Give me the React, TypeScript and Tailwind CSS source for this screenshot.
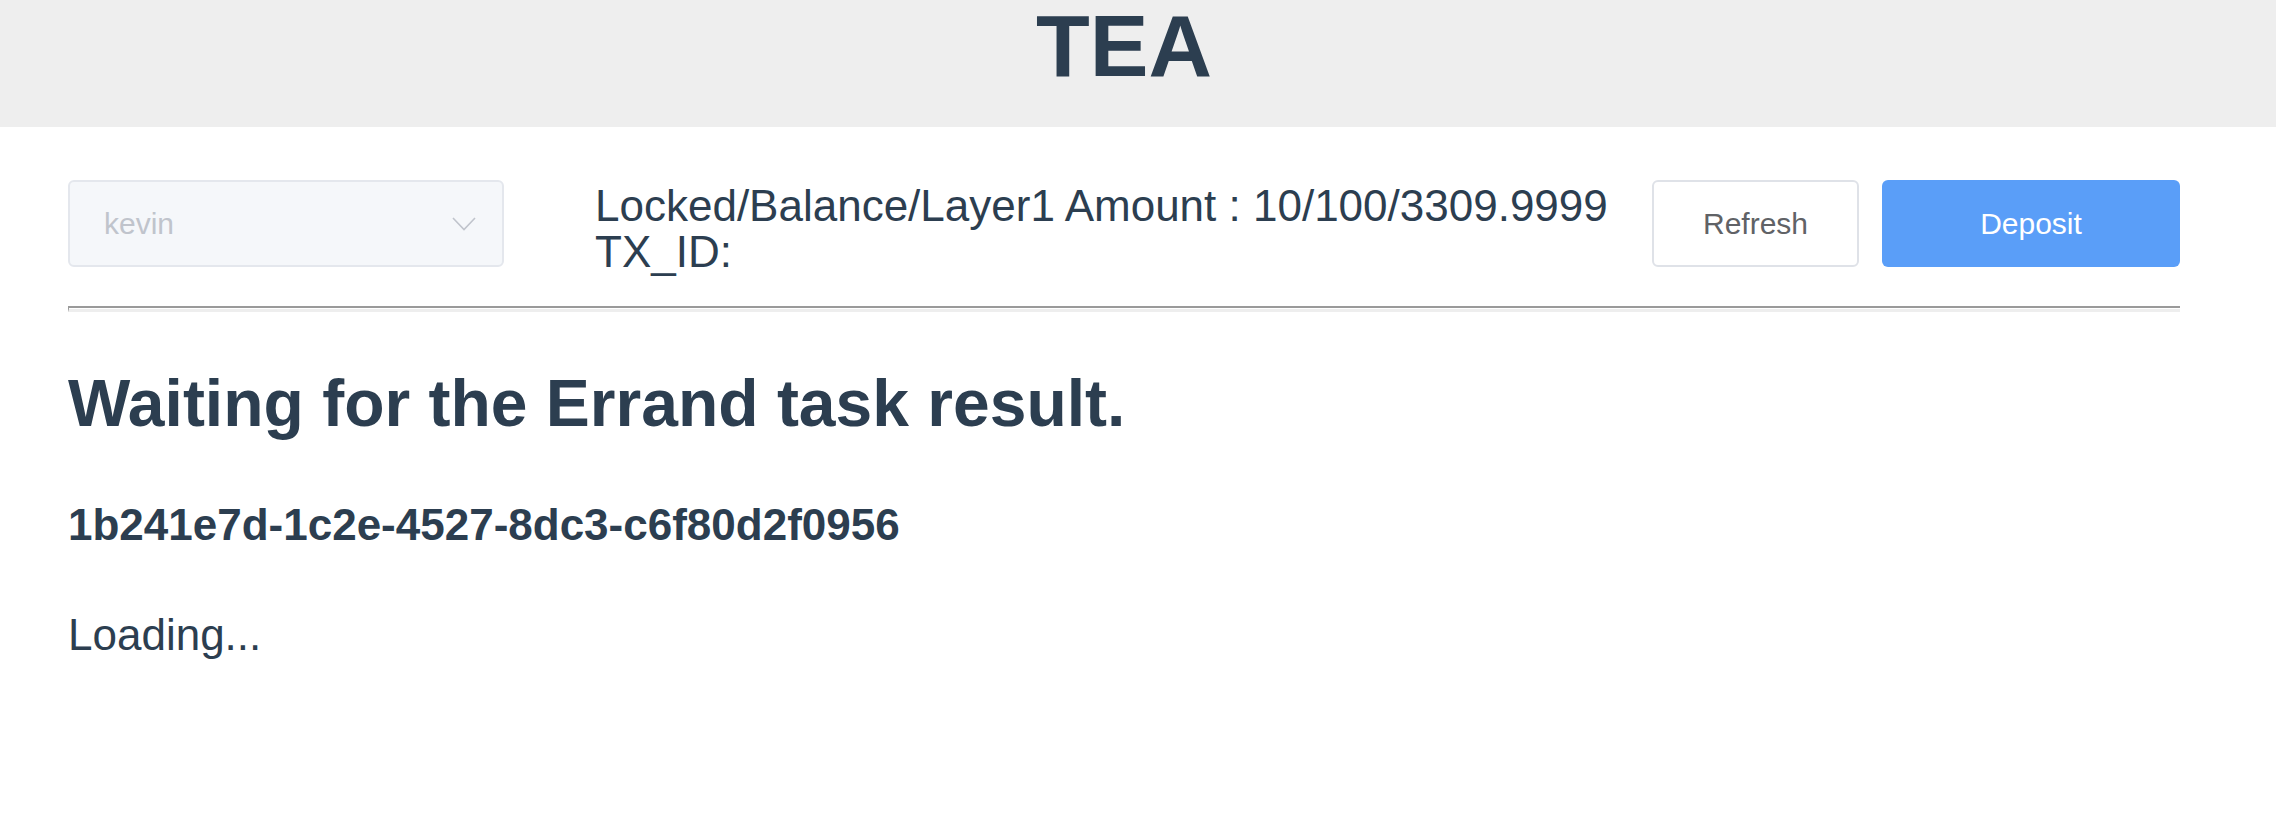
import React from 'react';

const txt = 'text-[#2c3e50]';

function Chevron() {
  return (
    <svg width="24" height="14" viewBox="0 0 24 14" fill="none">
      <polyline points="1,1 12,12.5 23,1" stroke="#c0c4cc" strokeWidth="1.6" />
    </svg>
  );
}

export default function App() {
  const account = 'kevin';
  const amounts = '10/100/3309.9999';
  const taskId = '1b241e7d-1c2e-4527-8dc3-c6f80d2f0956';

  return (
    <div className={`min-h-[828px] bg-white font-['Liberation_Sans',Arial,sans-serif] ${txt}`}>
      {/* Header */}
      <div className="h-[127px] w-full bg-[#eeeeee]">
        <div className="w-[2248px] pt-[2px] text-center text-[88px] font-bold leading-[88px]">TEA</div>
      </div>

      <div className="w-[2248px] px-[68px] pt-[46px]">
        {/* Toolbar */}
        <div className="flex h-[94px] items-start">
          <div className="mt-[7px] flex h-[87px] w-[436px] shrink-0 items-center justify-between rounded-[6px] border-2 border-[#e4e7ed] bg-[#f5f7fa] pl-[34px] pr-[26px]">
            <span className="text-[30px] leading-[30px] text-[#c0c4cc]">{account}</span>
            <Chevron />
          </div>

          <div className="ml-[91px] mt-[10px] flex-1 text-[44px] leading-[46px]">
            <div>Locked/Balance/Layer1 Amount : {amounts}</div>
            <div>TX_ID:</div>
          </div>

          <div className="mt-[7px] flex shrink-0 gap-[23px]">
            <button className="h-[87px] w-[207px] rounded-[6px] border-2 border-[#dfe2e8] bg-white text-[30px] leading-[30px] text-[#606266]">
              Refresh
            </button>
            <button className="h-[87px] w-[298px] rounded-[6px] bg-[#5a9ef8] text-[30px] leading-[30px] text-white">
              Deposit
            </button>
          </div>
        </div>

        {/* Divider */}
        <div className="mt-[39px] h-[6px] border-t-2 border-b-[3px] border-l border-t-[#9a9a9a] border-b-[#eeeeee] border-l-[#9a9a9a]" />

        {/* Task status */}
        <h1 className="mt-[59px] text-[66px] font-bold leading-[65px]">Waiting for the Errand task result.</h1>
        <div className="mt-[67px] text-[44px] font-bold leading-[44px]">{taskId}</div>
        <div className="mt-[66px] text-[44px] leading-[44px]">Loading...</div>
      </div>
    </div>
  );
}
